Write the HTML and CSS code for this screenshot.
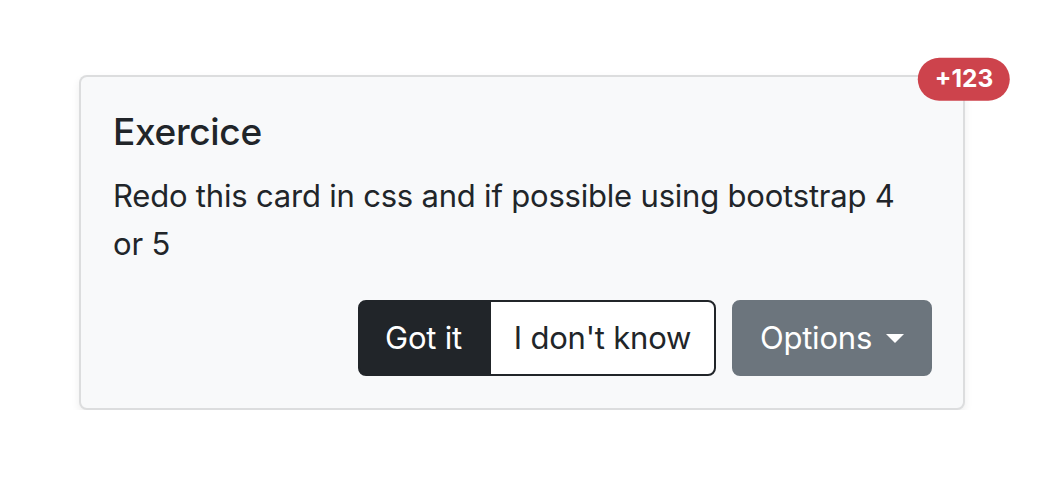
FILE: index.html
```html
<!DOCTYPE html>
<html>
<head>
<meta charset="utf-8">
<link rel="stylesheet" href="styles.css">
</head>
<body>
<div class="page">
  <div class="card">
    <span class="badge">+123</span>
    <h5 class="card-title">Exercice</h5>
    <p class="card-text">Redo this card in css and if possible using bootstrap 4 or 5</p>
    <div class="actions">
      <div class="btn-group">
        <button class="btn btn-dark">Got it</button>
        <button class="btn btn-outline">I don't know</button>
      </div>
      <button class="btn btn-secondary">Options<span class="caret"></span></button>
    </div>
  </div>
</div>
</body>
</html>
```

FILE: styles.css
```css
* { box-sizing: border-box; }
html, body { margin: 0; padding: 0; background: #fff; }
body {
  font-family: Inter, "Noto Sans", sans-serif;
  color: #212529;
}
.page {
  padding: 75px 0 0 79px;
}
.card {
  position: relative;
  width: 886px;
  background: #f8f9fa;
  border: 2px solid rgba(0, 0, 0, 0.11);
  border-radius: 8px;
  box-shadow: 0 4px 8px rgba(0, 0, 0, 0.075);
  padding: 31px 31px 32px 32px;
}
.badge {
  position: absolute;
  top: 0;
  left: 100%;
  transform: translate(-50%, -50%);
  margin-top: 2px;
  margin-left: 1px;
  background: #cd434c;
  color: #fff;
  font-weight: 700;
  font-size: 24.5px;
  line-height: 1;
  padding: 8px 17px 10px;
  border-radius: 40px;
  white-space: nowrap;
}
.card-title {
  margin: 0 0 16px 0;
  font-size: 37px;
  font-weight: 500;
  line-height: 48px;
  letter-spacing: -0.3px;
}
.card-text {
  margin: 0 0 32px 0;
  font-size: 31px;
  line-height: 48px;
  letter-spacing: -0.2px;
}
.actions {
  display: flex;
  justify-content: flex-end;
  gap: 16px;
}
.btn-group {
  display: flex;
}
.btn {
  font-family: inherit;
  font-size: 31px;
  line-height: 48px;
  letter-spacing: -0.2px;
  padding: 12px 0;
  border: 2px solid #212529;
  border-radius: 8px;
  cursor: pointer;
  display: flex;
  align-items: center;
  white-space: nowrap;
}
.btn-dark {
  background: #212529;
  color: #fff;
  border-top-right-radius: 0;
  border-bottom-right-radius: 0;
  width: 131px;
  justify-content: center;
}
.btn-outline {
  background: #fff;
  color: #212529;
  border-top-left-radius: 0;
  border-bottom-left-radius: 0;
  width: 227px;
  justify-content: center;
}
.btn-secondary {
  background: #6c757d;
  border-color: #6c757d;
  color: #fff;
  width: 200px;
  justify-content: center;
}
.caret {
  display: inline-block;
  margin-left: 14px;
  width: 0;
  height: 0;
  border-top: 9px solid #fff;
  border-left: 9px solid transparent;
  border-right: 9px solid transparent;
}
```
